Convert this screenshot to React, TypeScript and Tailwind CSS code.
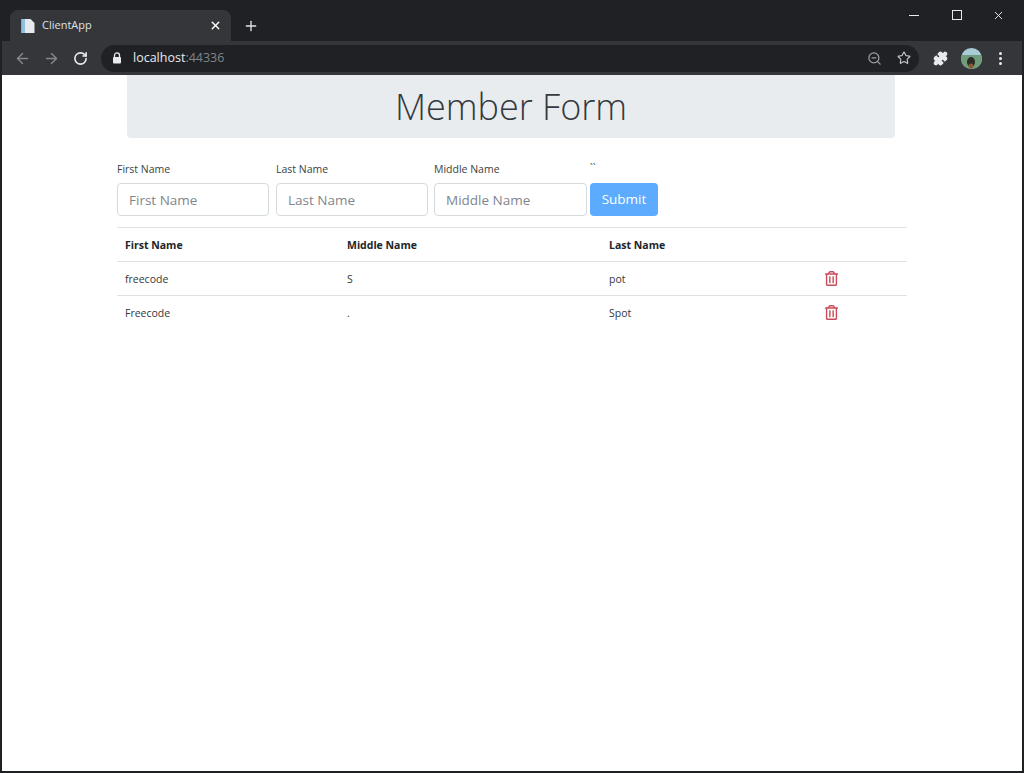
import { ArrowLeft, ArrowRight, RotateCw, ZoomOut, Star, Puzzle, Plus, X } from "lucide-react";
import { FaRegTrashAlt } from "react-icons/fa";

const font = "font-['Open_Sans','Noto_Sans',sans-serif]";

function Field({ label, width, gap }: { label: string; width: string; gap: string }) {
  return (
    <div className={`flex flex-col ${width} ${gap}`}>
      <label className="h-[27px] pt-[5px] text-[10.5px] leading-[16px] text-[#3a3f44]">{label}</label>
      <input
        placeholder={label}
        className="h-[33px] w-full rounded-[4px] border border-[#d5dade] bg-white px-[11px] text-[13.5px] outline-none placeholder:text-[#7f868d]"
      />
    </div>
  );
}

function Row({ first, middle, last }: { first: string; middle: string; last: string }) {
  return (
    <tr className="h-[34px] border-t border-[#dee2e6] text-[10.5px] text-[#33383d]">
      <td className="px-2 pt-[2px]">{first}</td>
      <td className="px-2 pt-[2px]">{middle}</td>
      <td className="px-2 pt-[2px]">{last}</td>
      <td className="pl-[7px]">
        <FaRegTrashAlt className="size-[15px] text-[#cb4a58]" />
      </td>
    </tr>
  );
}

export default function App() {
  return (
    <div className={`flex h-[773px] w-[1024px] flex-col overflow-hidden border-x-2 border-b-2 border-[#202124] bg-white ${font}`}>
      {/* browser chrome */}
      <div className="flex h-[41px] items-end bg-[#202124] pl-[8px]">
        <div className="flex h-[31px] w-[221px] items-center rounded-t-[8px] bg-[#35363a] pl-[10px] pr-[9px]">
          <svg width="16" height="16" viewBox="0 0 16 16" className="mr-[6px]">
            <path d="M1.5 1h9l4 4v10h-13z" fill="#e6eaee" />
            <path d="M1.5 1h3.500v14h-3.500z" fill="#8fc0dc" />
          </svg>
          <span className="flex-1 text-[11px] text-[#dfe1e5]">ClientApp</span>
          <X className="size-[13px] text-white" strokeWidth={2.5} />
        </div>
        <Plus className="mb-[7px] ml-[12px] size-[16px] text-[#e3e4e6]" strokeWidth={2} />
        <div className="ml-auto flex h-[41px] items-start pt-[10px] text-[#e8eaed]">
          <span className="mr-[33px] mt-[5px] h-px w-[10px] bg-[#e8eaed]" />
          <span className="mr-[30px] size-[10px] border border-[#e8eaed]" />
          <X className="mr-[17px] mt-[-1px] size-[13px]" strokeWidth={1.8} />
        </div>
      </div>
      <div className="flex h-[34px] items-center bg-[#35363a] text-[#85888c]">
        <ArrowLeft className="ml-[12px] size-[17px]" strokeWidth={2} />
        <ArrowRight className="ml-[12px] size-[17px]" strokeWidth={2} />
        <RotateCw className="ml-[13px] size-[15px] text-[#e8eaed]" strokeWidth={2.6} />
        <div className="ml-[13px] flex h-[27px] w-[818px] items-center rounded-full bg-[#202124] pl-[11px] pr-[8px]">
          <svg width="10" height="12" viewBox="0 0 10 12">
            <path d="M2.500 5V3.400a2.500 2.500 0 0 1 5 0V5" fill="none" stroke="#e8eaed" strokeWidth="1.300" />
            <rect x="1" y="5" width="8" height="6.500" rx="1" fill="#e8eaed" />
          </svg>
          <span className="ml-[11px] flex-1 text-[12.5px]">
            <span className="text-[#e8eaed]">localhost</span>
            <span className="text-[#80868b]">:44336</span>
          </span>
          <ZoomOut className="size-[15px] text-[#9aa0a6]" strokeWidth={2} />
          <Star className="ml-[15px] size-[14px] text-[#c4c7ca]" strokeWidth={2} />
        </div>
        <Puzzle className="ml-[14px] size-[15px] fill-[#e8eaed] text-[#e8eaed]" strokeWidth={2} />
        <svg width="21" height="21" viewBox="0 0 21 21" className="ml-[13px]">
          <clipPath id="avatar"><circle cx="10.500" cy="10.500" r="10.500" /></clipPath>
          <g clipPath="url(#avatar)">
            <rect width="21" height="21" fill="#a9cdd6" />
            <rect y="7" width="21" height="14" fill="#6f9c7c" />
            <ellipse cx="10" cy="14" rx="4" ry="5" fill="#2c2c26" />
            <circle cx="10" cy="18" r="2.500" fill="#8a5a30" />
          </g>
        </svg>
        <div className="ml-[17px] flex flex-col gap-[2px]">
          <span className="size-[3px] rounded-full bg-[#e8eaed]" />
          <span className="size-[3px] rounded-full bg-[#e8eaed]" />
          <span className="size-[3px] rounded-full bg-[#e8eaed]" />
        </div>
      </div>

      {/* page */}
      <div className="flex flex-1 flex-col pl-[115px]">
        <div className="ml-[10px] flex h-[63px] w-[768px] items-center justify-center rounded-b-[4px] bg-[#e9ecef]">
          <h1 className="text-[36px] font-light text-[#343a40]">Member Form</h1>
        </div>
        <div className="mt-[18px] flex items-end">
          <Field label="First Name" width="w-[152px]" gap="mr-[7px]" />
          <Field label="Last Name" width="w-[152px]" gap="mr-[6px]" />
          <Field label="Middle Name" width="w-[153px]" gap="mr-[3px]" />
          <div className="flex flex-col">
            <span className="h-[27px] pt-[5px] text-[10px] leading-[14px] text-[#3a3f44]">``</span>
            <button className="h-[33px] w-[68px] rounded-[4px] bg-[#5cabff] text-[13.5px] text-white">Submit</button>
          </div>
        </div>
        <table className="mt-[11px] w-[790px] table-fixed border-collapse text-left">
          <colgroup>
            <col className="w-[222px]" />
            <col className="w-[262px]" />
            <col className="w-[216px]" />
            <col className="w-[90px]" />
          </colgroup>
          <thead>
            <tr className="h-[34px] border-t border-[#dee2e6] text-[10.5px] font-bold text-[#212529]">
              <th className="px-2 pt-[2px]">First Name</th>
              <th className="px-2 pt-[2px]">Middle Name</th>
              <th className="px-2 pt-[2px]">Last Name</th>
              <th className="px-2" />
            </tr>
          </thead>
          <tbody>
            <Row first="freecode" middle="S" last="pot" />
            <Row first="Freecode" middle="." last="Spot" />
          </tbody>
        </table>
      </div>
    </div>
  );
}
